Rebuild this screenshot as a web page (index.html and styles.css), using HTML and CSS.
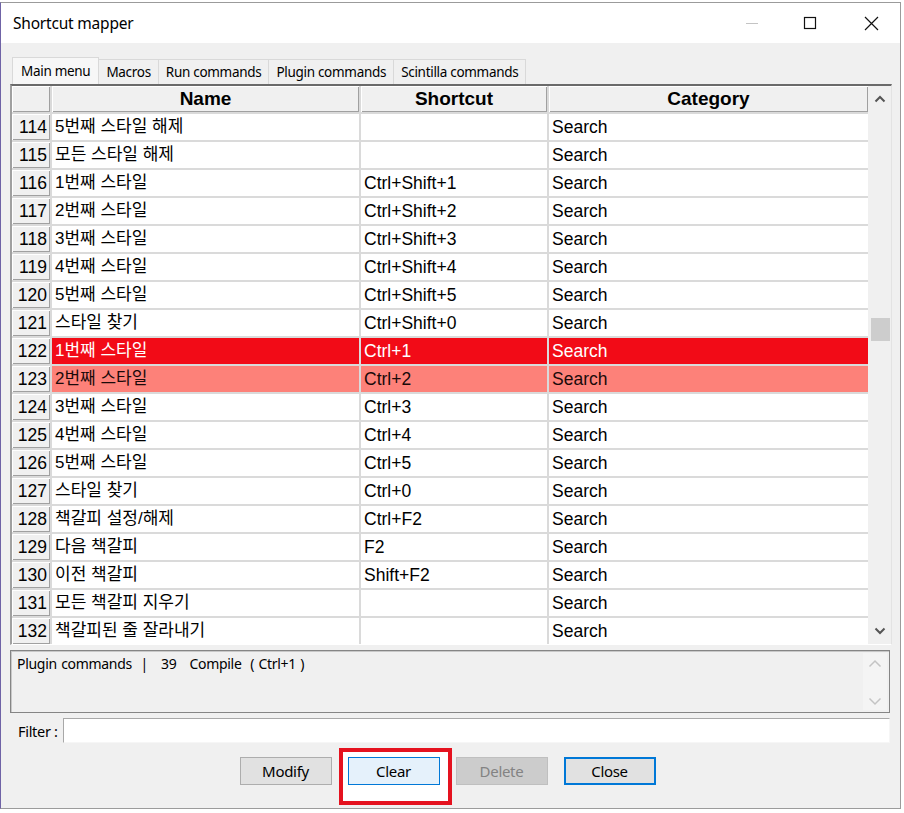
FILE: index.html
```html
<!DOCTYPE html>
<html lang="ko">
<head>
<meta charset="utf-8">
<title>Shortcut mapper</title>
<link rel="stylesheet" href="styles.css">
</head>
<body>
<div class="window">
  <div class="titlebar">
    <span class="title">Shortcut mapper</span>
    <span class="ctl"><svg width="14" height="14" viewBox="0 0 14 14"><line x1="1" y1="7.5" x2="13" y2="7.5" stroke="#c4c4c4" stroke-width="1"/></svg></span>
    <span class="ctl ctl-max"><svg width="14" height="14" viewBox="0 0 14 14"><rect x="1.5" y="1.5" width="11" height="11" fill="none" stroke="#111" stroke-width="1.2"/></svg></span>
    <span class="ctl"><svg width="15" height="15" viewBox="0 0 15 15"><path d="M1 1 L14 14 M14 1 L1 14" stroke="#111" stroke-width="1.2" fill="none"/></svg></span>
  </div>
  <div class="client">
    <div class="tabs">
      <div class="tab active">Main menu</div>
      <div class="tab">Macros</div>
      <div class="tab">Run commands</div>
      <div class="tab">Plugin commands</div>
      <div class="tab">Scintilla commands</div>
    </div>
    <div class="frame">
      <div class="grid">
        <div class="hcell"></div><div class="hcell">Name</div><div class="hcell">Shortcut</div><div class="hcell">Category</div>

        <div class="num">114</div><div class="cell name">5번째 스타일 해제</div><div class="cell"></div><div class="cell">Search</div>
        <div class="num">115</div><div class="cell name">모든 스타일 해제</div><div class="cell"></div><div class="cell">Search</div>
        <div class="num">116</div><div class="cell name">1번째 스타일</div><div class="cell">Ctrl+Shift+1</div><div class="cell">Search</div>
        <div class="num">117</div><div class="cell name">2번째 스타일</div><div class="cell">Ctrl+Shift+2</div><div class="cell">Search</div>
        <div class="num">118</div><div class="cell name">3번째 스타일</div><div class="cell">Ctrl+Shift+3</div><div class="cell">Search</div>
        <div class="num">119</div><div class="cell name">4번째 스타일</div><div class="cell">Ctrl+Shift+4</div><div class="cell">Search</div>
        <div class="num">120</div><div class="cell name">5번째 스타일</div><div class="cell">Ctrl+Shift+5</div><div class="cell">Search</div>
        <div class="num">121</div><div class="cell name">스타일 찾기</div><div class="cell">Ctrl+Shift+0</div><div class="cell">Search</div>
        <div class="num">122</div><div class="cell name red">1번째 스타일</div><div class="cell red">Ctrl+1</div><div class="cell red">Search</div>
        <div class="num">123</div><div class="cell name pink">2번째 스타일</div><div class="cell pink">Ctrl+2</div><div class="cell pink">Search</div>
        <div class="num">124</div><div class="cell name">3번째 스타일</div><div class="cell">Ctrl+3</div><div class="cell">Search</div>
        <div class="num">125</div><div class="cell name">4번째 스타일</div><div class="cell">Ctrl+4</div><div class="cell">Search</div>
        <div class="num">126</div><div class="cell name">5번째 스타일</div><div class="cell">Ctrl+5</div><div class="cell">Search</div>
        <div class="num">127</div><div class="cell name">스타일 찾기</div><div class="cell">Ctrl+0</div><div class="cell">Search</div>
        <div class="num">128</div><div class="cell name">책갈피 설정/해제</div><div class="cell">Ctrl+F2</div><div class="cell">Search</div>
        <div class="num">129</div><div class="cell name">다음 책갈피</div><div class="cell">F2</div><div class="cell">Search</div>
        <div class="num">130</div><div class="cell name">이전 책갈피</div><div class="cell">Shift+F2</div><div class="cell">Search</div>
        <div class="num">131</div><div class="cell name">모든 책갈피 지우기</div><div class="cell"></div><div class="cell">Search</div>
        <div class="num">132</div><div class="cell name">책갈피된 줄 잘라내기</div><div class="cell"></div><div class="cell">Search</div>
      </div>
      <div class="vscroll">
        <div class="arrow"><svg width="12" height="8" viewBox="0 0 12 8"><polyline points="1.5,6.5 6,2 10.5,6.5" fill="none" stroke="#555" stroke-width="2"/></svg></div>
        <div class="track"><div class="thumb"></div></div>
        <div class="arrow"><svg width="12" height="8" viewBox="0 0 12 8"><polyline points="1.5,1.5 6,6 10.5,1.5" fill="none" stroke="#555" stroke-width="2"/></svg></div>
      </div>
    </div>
    <div class="status">
      <div class="status-text">Plugin commands  |   39   Compile  ( Ctrl+1 )</div>
      <div class="status-scroll">
        <svg width="14" height="9" viewBox="0 0 14 9"><polyline points="1.5,7.5 7,2 12.5,7.5" fill="none" stroke="#c4c4c4" stroke-width="1.5"/></svg>
        <svg width="14" height="9" viewBox="0 0 14 9"><polyline points="1.5,1.5 7,7 12.5,1.5" fill="none" stroke="#c4c4c4" stroke-width="1.5"/></svg>
      </div>
    </div>
    <div class="filter">
      <span class="filter-label">Filter :</span>
      <div class="filter-input"></div>
    </div>
    <div class="buttons">
      <div class="btn">Modify</div>
      <div class="annot"><div class="btn btn-hover">Clear</div></div>
      <div class="btn btn-disabled">Delete</div>
      <div class="btn btn-default">Close</div>
    </div>
  </div>
</div>
</body>
</html>
```

FILE: styles.css
```css
html, body {
  margin: 0;
  padding: 0;
  background: #ffffff;
}

body {
  font-family: "Noto Sans", "Open Sans", sans-serif;
  color: #000;
}

.window {
  margin: 2px 3px 0 0;
  border: 1px solid #9b9b9b;
  border-left-color: #6f63a6;
  background: #f0f0f0;
}

.titlebar {
  height: 40px;
  background: #ffffff;
  display: flex;
  align-items: center;
}

.title {
  flex: 1;
  padding-left: 12px;
  font-size: 15.5px;
  letter-spacing: -0.2px;
}

.ctl {
  width: 58px;
  height: 40px;
  display: flex;
  align-items: center;
  justify-content: center;
}

.ctl-max {
  margin-right: 3px;
}

.client {
  padding: 14px 8px 23px 9px;
}

.tabs {
  display: flex;
  align-items: flex-end;
  height: 27px;
  padding-left: 2px;
}

.tab {
  box-sizing: border-box;
  height: 25px;
  padding: 0 7px;
  border: 1px solid #d9d9d9;
  border-bottom: none;
  margin-right: -1px;
  background: #f0f0f0;
  font-size: 13.5px;
  letter-spacing: -0.3px;
  line-height: 24px;
  white-space: nowrap;
}

.tab.active {
  height: 27px;
  padding: 0 8px;
  background: #f7f7f7;
  line-height: 26px;
}

.frame {
  display: flex;
  border-style: solid;
  border-width: 2px 1px 1px 2px;
  border-color: #6a6a6a #e3e3e3 #ffffff #a0a0a0;
}

.grid {
  display: grid;
  grid-template-columns: 38px 307px 186px 319px;
  grid-auto-rows: 26px;
  gap: 2px;
  background: #dadada;
  font-family: "Liberation Sans", "Noto Sans CJK KR", sans-serif;
}

.hcell {
  background: #f0f0f0;
  box-shadow: inset 1px 1px #ffffff, inset -1px -1px #a0a0a0;
  font-weight: bold;
  font-size: 19px;
  line-height: 26px;
  text-align: center;
}

.num {
  background: #f0f0f0;
  box-shadow: inset 1px 1px #ffffff, inset -1px -1px #a0a0a0;
  font-size: 17.5px;
  line-height: 26px;
  text-align: right;
  padding-right: 3px;
}

.cell {
  background: #ffffff;
  font-size: 17.5px;
  line-height: 26px;
  padding-left: 3px;
  white-space: nowrap;
  overflow: hidden;
}

.cell.name {
  font-size: 17px;
}

.cell.red {
  background: #f20b17;
  color: #ffffff;
}

.cell.pink {
  background: #fd8179;
  color: #1a0a0a;
}

.vscroll {
  width: 23px;
  display: flex;
  flex-direction: column;
  background: #f0f0f0;
}

.arrow {
  height: 26px;
  display: flex;
  align-items: center;
  justify-content: center;
}

.track {
  flex: 1;
}

.thumb {
  margin: 206px 1px 0 3px;
  height: 23px;
  background: #cdcdcd;
}

.status {
  margin: 5px 2px 0 0;
  height: 63px;
  box-sizing: border-box;
  border: 1px solid #858585;
  box-shadow: inset 1px 1px #c8c8c8;
  display: flex;
}

.status-text {
  flex: 1;
  padding: 4px 6px;
  font-size: 14px;
  letter-spacing: -0.3px;
  word-spacing: 1px;
  line-height: 18px;
  white-space: pre;
}

.status-scroll {
  width: 24px;
  margin: 2px 2px 2px 0;
  padding: 6px 0 4px;
  background: #f4f4f4;
  display: flex;
  flex-direction: column;
  justify-content: space-between;
  align-items: center;
}

.filter {
  margin: 5px 2px 0 0;
  height: 25px;
  display: flex;
  align-items: center;
}

.filter-label {
  width: 45px;
  padding-left: 8px;
  font-size: 14.5px;
  letter-spacing: -0.3px;
}

.filter-input {
  flex: 1;
  height: 25px;
  box-sizing: border-box;
  background: #ffffff;
  border: 1px solid;
  border-color: #a8a8a8 #f6f6f6 #f6f6f6 #a8a8a8;
}

.buttons {
  margin-top: 14px;
  display: flex;
  justify-content: center;
  gap: 16px;
  padding-right: 7px;
}

.btn {
  width: 92px;
  height: 28px;
  box-sizing: border-box;
  border: 1px solid #adadad;
  background: #e1e1e1;
  font-size: 15px;
  letter-spacing: -0.3px;
  display: flex;
  align-items: center;
  justify-content: center;
}

.btn-hover {
  background: #e5f1fb;
  border-color: #0078d7;
}

.btn-disabled {
  background: #cccccc;
  border-color: #bfbfbf;
  color: #838383;
}

.btn-default {
  border: 2px solid #0078d7;
}

.annot {
  position: relative;
  z-index: 0;
  display: flex;
}

.annot::before {
  content: "";
  position: absolute;
  left: -9px;
  right: -12px;
  top: -9px;
  bottom: -20px;
  border: 4px solid #e5121f;
  background: #ffffff;
  z-index: -1;
}
```
